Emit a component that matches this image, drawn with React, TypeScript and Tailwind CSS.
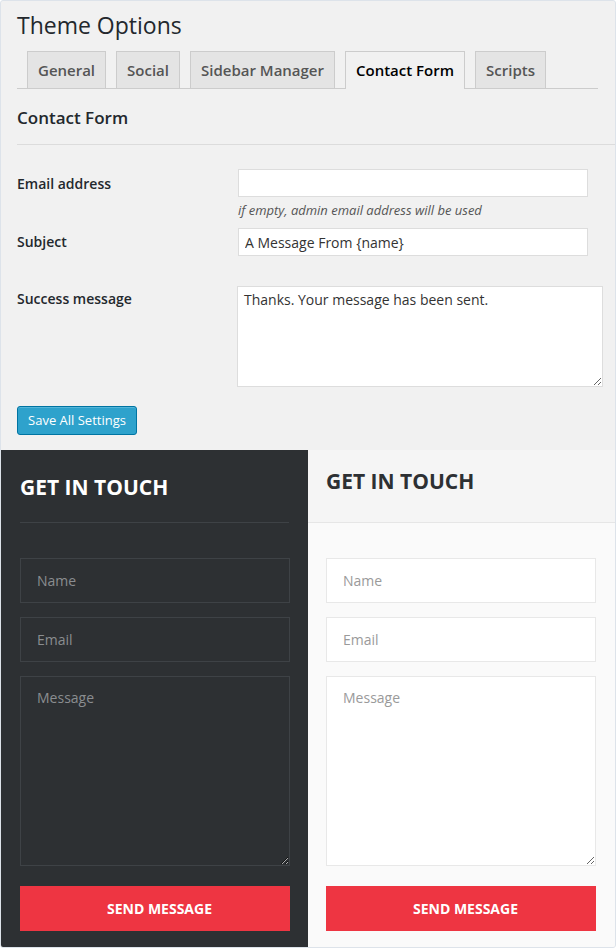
const tabs = ["General", "Social", "Sidebar Manager", "Contact Form", "Scripts"];

const ContactCard = ({ dark }: { dark: boolean }) => {
  const field = dark
    ? "border-[#3e4246] bg-[#2d3033] text-white placeholder:text-[#8a8d90]"
    : "border-[#e8e8e8] bg-white text-[#333] placeholder:text-[#9a9a9a]";

  return (
    <div className={dark ? "w-[307px] bg-[#2d3033]" : "w-[307px] bg-[#fafafa]"}>
      {dark ? (
        <div className="mx-[19px] h-[73px] border-b border-[#3e4246] pt-[22px]">
          <h2 className="text-[21px] font-bold leading-[30px] text-white">GET IN TOUCH</h2>
        </div>
      ) : (
        <div className="h-[73px] border-b border-[#e6e6e6] bg-[#f5f5f5] px-[18px] pt-[16px]">
          <h2 className="text-[21px] font-bold leading-[30px] text-[#2d3033]">GET IN TOUCH</h2>
        </div>
      )}
      <div className={dark ? "flex flex-col gap-[14px] px-[19px] pt-[35px]" : "flex flex-col gap-[14px] px-[18px] pt-[35px]"}>
        <input
          placeholder="Name"
          className={`h-[45px] w-[270px] border px-[16px] text-[14px] outline-none ${field}`}
        />
        <input
          placeholder="Email"
          className={`h-[45px] w-[270px] border px-[16px] text-[14px] outline-none ${field}`}
        />
        <textarea
          placeholder="Message"
          className={`h-[190px] w-[270px] border px-[16px] py-[10px] text-[14px] outline-none ${field}`}
        />
        <button className="mt-[6px] h-[45px] w-[270px] bg-[#ee3542] pl-[9px] text-[14px] font-bold text-white">
          SEND MESSAGE
        </button>
      </div>
    </div>
  );
};

export default function App() {
  return (
    <div className="flex h-[948px] w-[616px] flex-col overflow-hidden rounded-[3px] border border-[#dde3ea] bg-[#f1f1f1] font-['Open_Sans',sans-serif] text-[#23282d]">
      <div className="pl-[16px] pt-[9px]">
        <h1 className="text-[23px] leading-[31px] text-[#23282d]">Theme Options</h1>

        <div className="mr-[17px] mt-[10px] flex gap-[10px] border-b border-[#ccc] pl-[10px]">
          {tabs.map((t) => (
            <div
              key={t}
              className={
                t === "Contact Form"
                  ? "-mb-px h-[38px] border border-b-0 border-[#ccc] bg-[#f1f1f1] px-[10px] pt-[7px] text-[15px] font-semibold text-[#000]"
                  : "h-[37px] border border-b-0 border-[#ccc] bg-[#e4e4e4] px-[10px] pt-[7px] text-[15px] font-semibold text-[#555]"
              }
            >
              {t}
            </div>
          ))}
        </div>

        <h3 className="mt-[17px] text-[17px] font-semibold leading-[24px]">Contact Form</h3>
        <div className="mt-[14px] border-t border-[#dcdcdc]" />

        <div className="mt-[24px] flex">
          <label className="w-[221px] pt-[4px] text-[14px] font-semibold">Email address</label>
          <div>
            <input className="h-[28px] w-[350px] border border-[#ddd] bg-white px-[6px] text-[14px] outline-none" />
            <p className="mt-[4px] text-[13px] italic leading-[19px] text-[#555]">
              if empty, admin email address will be used
            </p>
          </div>
        </div>

        <div className="mt-[8px] flex">
          <label className="w-[221px] pt-[3px] text-[14px] font-semibold">Subject</label>
          <input
            defaultValue="A Message From {name}"
            className="h-[28px] w-[350px] border border-[#ddd] bg-white px-[6px] text-[14px] text-[#333] outline-none"
          />
        </div>

        <div className="mt-[30px] flex">
          <label className="w-[220px] pt-[2px] text-[14px] font-semibold">Success message</label>
          <textarea
            defaultValue="Thanks. Your message has been sent."
            className="h-[101px] w-[366px] border border-[#ddd] bg-white px-[6px] py-[2px] text-[14px] text-[#333] outline-none"
          />
        </div>

        <button className="mt-[19px] h-[29px] w-[120px] rounded-[3px] border border-[#0074a2] bg-[#2ea2cc] text-[13px] text-white shadow-[inset_0_1px_0_rgba(120,200,230,0.5)]">
          Save All Settings
        </button>
      </div>

      <div className="mt-[15px] flex flex-1">
        <ContactCard dark />
        <ContactCard dark={false} />
      </div>
    </div>
  );
}
